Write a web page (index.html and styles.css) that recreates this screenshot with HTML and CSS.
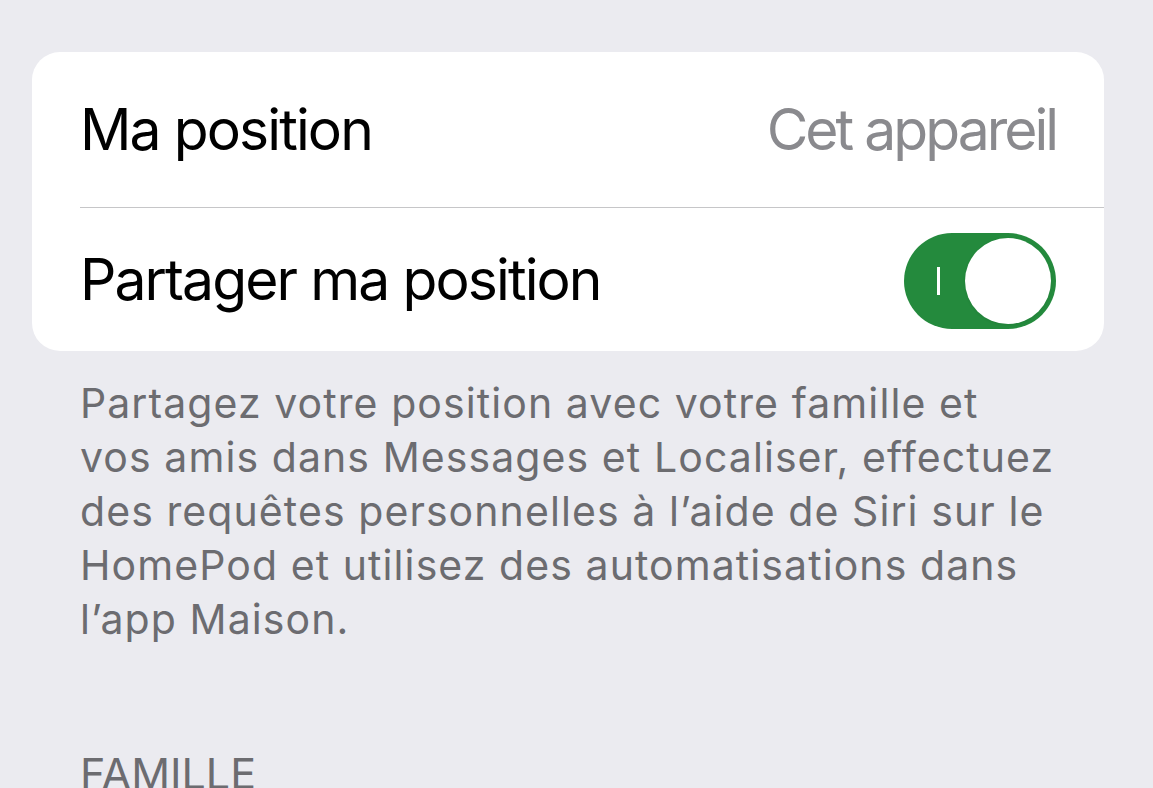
FILE: index.html
```html
<!DOCTYPE html>
<html lang="fr">
<head>
<meta charset="utf-8">
<link rel="stylesheet" href="styles.css">
</head>
<body>
<div class="page">
  <div class="card">
    <div class="row row-first">
      <span class="label">Ma position</span>
      <span class="value">Cet appareil</span>
    </div>
    <div class="row row-second">
      <span class="label">Partager ma position</span>
      <span class="toggle"><span class="toggle-i"></span><span class="knob"></span></span>
    </div>
  </div>
  <p class="footnote">Partagez votre position avec votre famille et<br>vos amis dans Messages et Localiser, effectuez<br>des requêtes personnelles à l’aide de Siri sur le<br>HomePod et utilisez des automatisations dans<br>l’app Maison.</p>
  <div class="section-header">FAMILLE</div>
</div>
</body>
</html>
```
FILE: styles.css
```css
html, body {
  margin: 0;
  padding: 0;
  background: #ebebf0;
  font-family: Inter, "Noto Sans", sans-serif;
  -webkit-font-smoothing: antialiased;
}
.page {
  padding: 52px 49px 0 32px;
  overflow: hidden;
  height: 788px;
  box-sizing: border-box;
}
.card {
  background: #fff;
  border-radius: 28px;
  overflow: hidden;
}
.row {
  display: flex;
  align-items: center;
  justify-content: space-between;
  margin-left: 48px;
  padding-right: 48px;
}
.row-first {
  height: 155px;
  border-bottom: 1px solid #c6c6c8;
}
.row-second {
  height: 143px;
}
.label {
  font-size: 57px;
  color: #000;
  letter-spacing: -1.9px;
}
.value {
  font-size: 57px;
  color: #8a8a8e;
  letter-spacing: -3px;
}
.toggle {
  position: relative;
  width: 152px;
  height: 96px;
  border-radius: 48px;
  background: #248a3d;
  display: block;
  margin-top: 3px;
}
.toggle-i {
  position: absolute;
  left: 33px;
  top: 34px;
  width: 3px;
  height: 28px;
  background: #fff;
}
.knob {
  position: absolute;
  right: 4px;
  top: 4px;
  width: 86px;
  height: 86px;
  margin: 1px;
  border-radius: 50%;
  background: #fff;
  box-shadow: 0 1px 3px rgba(0,0,0,0.08);
}
.footnote {
  margin: 25px 0 0 48px;
  font-size: 41px;
  line-height: 54px;
  color: #6c6c70;
  letter-spacing: 1.08px;
  white-space: nowrap;
}
.section-header {
  margin: 101px 0 0 48px;
  font-size: 43px;
  color: #6c6c70;
}
```
